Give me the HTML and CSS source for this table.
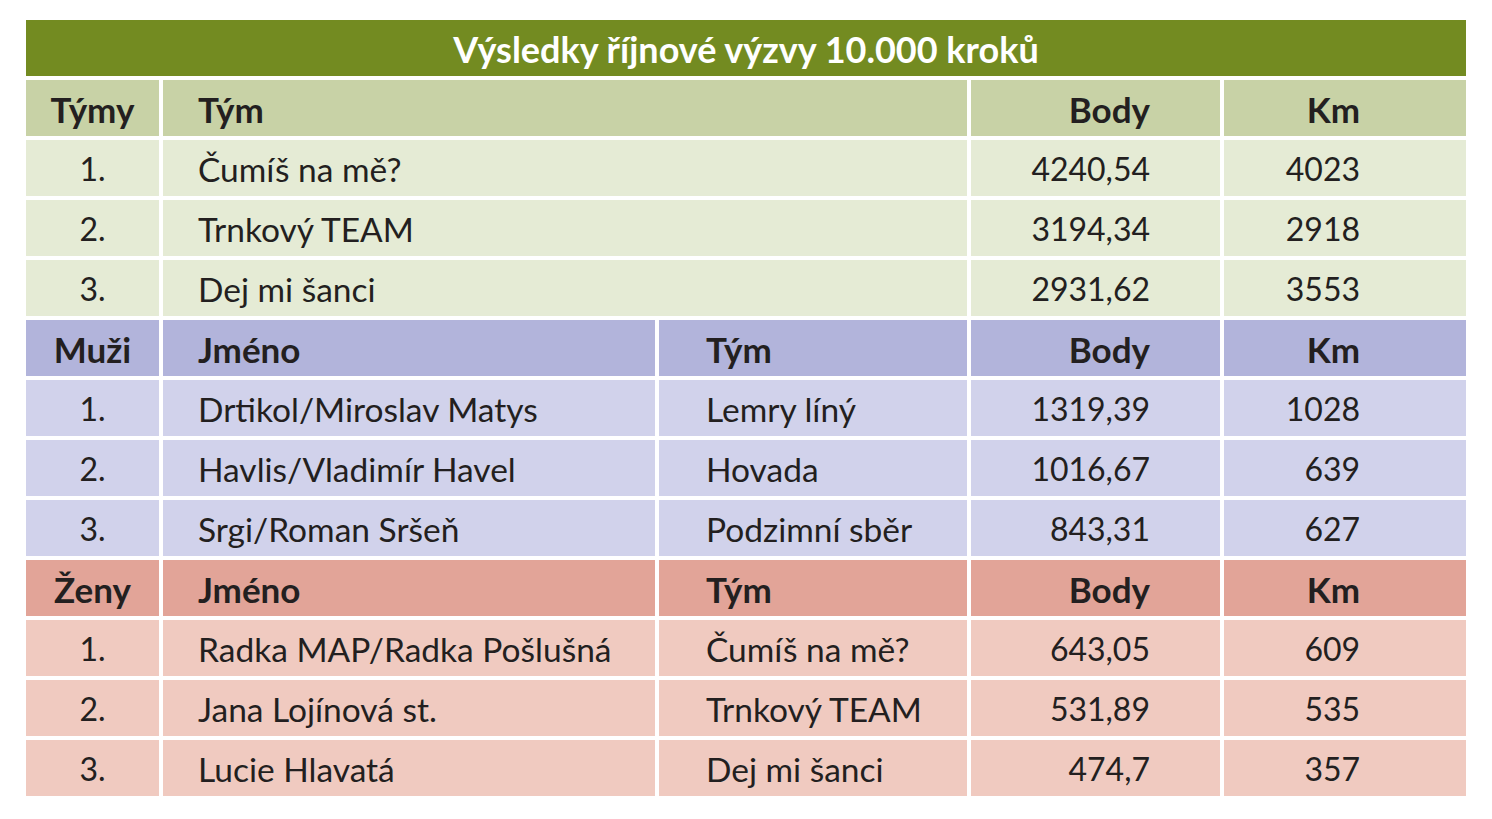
FILE: index.html
```html
<!DOCTYPE html>
<html lang="cs">
<head>
<meta charset="utf-8">
<title>Výsledky říjnové výzvy 10.000 kroků</title>
<link rel="stylesheet" href="styles.css">
</head>
<body>
<table class="results">
  <colgroup>
    <col class="c-rank"><col class="c-name"><col class="c-team"><col class="c-body"><col class="c-km">
  </colgroup>
  <tbody>
    <tr class="title"><td colspan="5">Výsledky říjnové výzvy 10.000 kroků</td></tr>

    <tr class="head teams"><td class="rank">Týmy</td><td class="name" colspan="2">Tým</td><td class="num">Body</td><td class="km">Km</td></tr>
    <tr class="row teams"><td class="rank">1.</td><td class="name" colspan="2">Čumíš na mě?</td><td class="num">4240,54</td><td class="km">4023</td></tr>
    <tr class="row teams"><td class="rank">2.</td><td class="name" colspan="2">Trnkový TEAM</td><td class="num">3194,34</td><td class="km">2918</td></tr>
    <tr class="row teams"><td class="rank">3.</td><td class="name" colspan="2">Dej mi šanci</td><td class="num">2931,62</td><td class="km">3553</td></tr>

    <tr class="head men"><td class="rank">Muži</td><td class="name">Jméno</td><td class="team">Tým</td><td class="num">Body</td><td class="km">Km</td></tr>
    <tr class="row men"><td class="rank">1.</td><td class="name">Drtikol/Miroslav Matys</td><td class="team">Lemry líný</td><td class="num">1319,39</td><td class="km">1028</td></tr>
    <tr class="row men"><td class="rank">2.</td><td class="name">Havlis/Vladimír Havel</td><td class="team">Hovada</td><td class="num">1016,67</td><td class="km">639</td></tr>
    <tr class="row men"><td class="rank">3.</td><td class="name">Srgi/Roman Sršeň</td><td class="team">Podzimní sběr</td><td class="num">843,31</td><td class="km">627</td></tr>

    <tr class="head women"><td class="rank">Ženy</td><td class="name">Jméno</td><td class="team">Tým</td><td class="num">Body</td><td class="km">Km</td></tr>
    <tr class="row women"><td class="rank">1.</td><td class="name">Radka MAP/Radka Pošlušná</td><td class="team">Čumíš na mě?</td><td class="num">643,05</td><td class="km">609</td></tr>
    <tr class="row women"><td class="rank">2.</td><td class="name">Jana Lojínová st.</td><td class="team">Trnkový TEAM</td><td class="num">531,89</td><td class="km">535</td></tr>
    <tr class="row women"><td class="rank">3.</td><td class="name">Lucie Hlavatá</td><td class="team">Dej mi šanci</td><td class="num">474,7</td><td class="km">357</td></tr>
  </tbody>
</table>
</body>
</html>
```
FILE: styles.css
```css
html, body {
  margin: 0;
  padding: 0;
  background: #ffffff;
}

body {
  font-family: Lato, "Open Sans", "Liberation Sans", sans-serif;
  color: #231f20;
}

.results {
  margin: 16px 0 0 22px;
  width: 1448px;
  table-layout: fixed;
  border-collapse: separate;
  border-spacing: 4px;
}

.c-rank { width: 133px; }
.c-name { width: 492px; }
.c-team { width: 308px; }
.c-body { width: 249px; }
.c-km   { width: 242px; }

.results td {
  height: 56px;
  padding: 2px 0 0 0;
  box-sizing: border-box;
  white-space: nowrap;
  font-size: 32px;
  line-height: 54px;
  vertical-align: middle;
}

.title td {
  background: #738b21;
  color: #ffffff;
  font-weight: 700;
  font-size: 36px;
  text-align: center;
}

.row .name,
.row .team { font-size: 33.5px; }

.head td { font-weight: 700; font-size: 35px; }

.rank { text-align: center; }
.name { padding-left: 35px !important; }
.team { padding-left: 47px !important; }
.num  { text-align: right; padding-right: 70px !important; }
.km   { text-align: right; padding-right: 106px !important; }

.head.teams td  { background: #c8d2a6; }
.row.teams td   { background: #e5ebd5; }
.head.men td    { background: #b2b4db; }
.row.men td     { background: #d1d2eb; }
.head.women td  { background: #e2a498; }
.row.women td   { background: #f0cac0; }
```
